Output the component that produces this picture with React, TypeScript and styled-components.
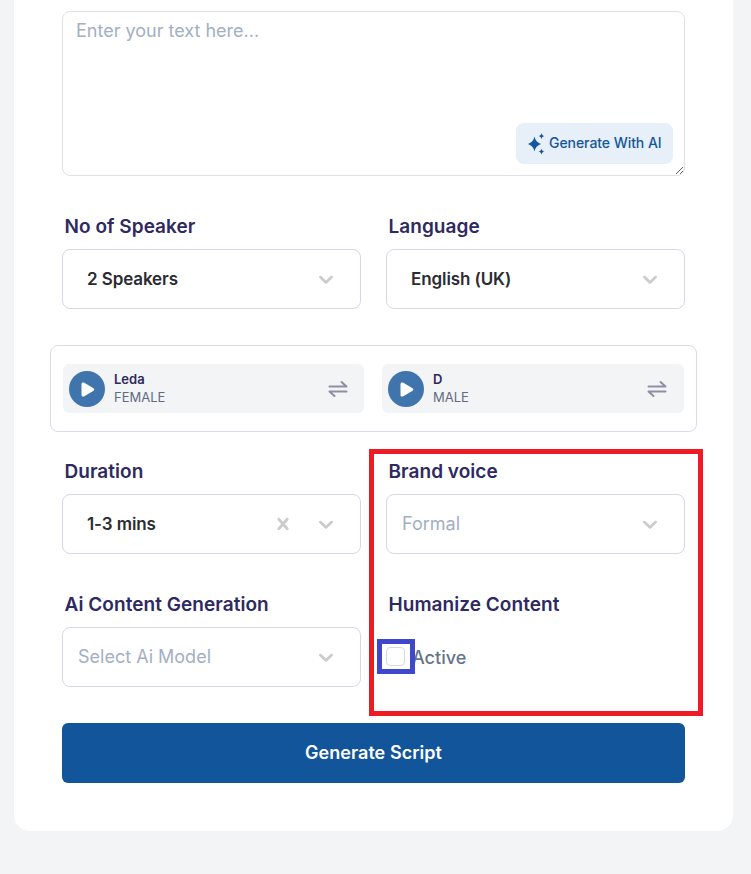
import React from "react";
import styled, { createGlobalStyle } from "styled-components";

const Global = createGlobalStyle`
  html, body { margin: 0; padding: 0; background: #f3f4f6; }
  body { font-family: Inter, "Liberation Sans", sans-serif; }
  * { box-sizing: border-box; }
`;

const Page = styled.div`
  position: relative;
  height: 874px;
  padding: 0 18px 0 14px;
  overflow: hidden;
  background: #f3f4f6;
`;

const Card = styled.main`
  background: #fff;
  border-radius: 0 0 16px 16px;
  padding: 11px 48px 48px;
`;

const TextWrap = styled.div`
  position: relative;
  height: 165px;
`;

const TextArea = styled.textarea`
  display: block;
  width: 100%;
  height: 165px;
  padding: 7px 13px;
  border: 1px solid #e1e1e4;
  border-radius: 8px;
  outline: none;
  font: 400 18px/24px Inter, sans-serif;
  color: #2b2b3a;
  &::placeholder { color: #a3afc2; opacity: 1; }
`;

const AiButton = styled.button`
  position: absolute;
  right: 12px;
  bottom: 12px;
  width: 157px;
  height: 41px;
  display: flex;
  align-items: center;
  gap: 2px;
  padding: 0 0 2px 11px;
  border: 0;
  border-radius: 8px;
  background: #e7eff8;
  color: #13569b;
  font: 500 14px/16px Inter, sans-serif;
  letter-spacing: -0.06px;
`;

const Grid = styled.div<{ $top: number }>`
  display: grid;
  grid-template-columns: 299px 299px;
  column-gap: 25px;
  margin-top: ${(p) => p.$top}px;
`;

const Field = styled.div<{ $top?: number }>`
  margin-top: ${(p) => p.$top ?? 0}px;
`;

const Label = styled.div`
  height: 24px;
  margin: 0 0 11px 2.5px;
  padding-top: 1px;
  font: 600 19px/24px Inter, sans-serif;
  letter-spacing: 0.05px;
  color: #2e2961;
`;

const Select = styled.div<{ $pad: number }>`
  height: 60px;
  display: flex;
  align-items: center;
  padding: 0 22px 0 ${(p) => p.$pad}px;
  border: 1px solid #d6d9e5;
  border-radius: 8px;
  background: #fff;
`;

const Value = styled.span<{ $muted?: boolean }>`
  flex: 1;
  font: ${(p) => (p.$muted ? "400 18px" : "600 17px")}/24px Inter, sans-serif;
  letter-spacing: ${(p) => (p.$muted ? 0 : -0.1)}px;
  color: ${(p) => (p.$muted ? "#a3afc2" : "#2b2b33")};
`;

const ClearSlot = styled.span`
  display: flex;
  margin-right: 19px;
`;

const VoiceBox = styled.section`
  display: grid;
  grid-template-columns: 301px 302px;
  column-gap: 18px;
  margin: 36px -12px 0;
  padding: 18px 12px;
  border: 1px solid #dadbe6;
  border-radius: 8px;
`;

const VoiceItem = styled.div`
  height: 49px;
  display: flex;
  align-items: center;
  gap: 9px;
  padding: 0 16px 0 6px;
  background: #f3f4f6;
  border-radius: 6px;
  &:last-child { padding-right: 17px; }
`;

const VoiceText = styled.div`
  flex: 1;
  margin-top: -1px;
`;

const VoiceName = styled.div`
  font: 600 13px/18px Inter, sans-serif;
  color: #2e2961;
`;

const VoiceGender = styled.div`
  font: 400 13px/18px Inter, sans-serif;
  color: #5f6b80;
`;

const CheckRow = styled.label`
  display: flex;
  align-items: center;
  height: 60px;
  margin-top: -1px;
`;

const Box = styled.span`
  width: 19px;
  height: 19px;
  border: 1px solid #d6d9e5;
  border-radius: 4px;
  background: #fff;
`;

const CheckText = styled.span`
  margin: 3px 0 0 7px;
  font: 500 18px/24px Inter, sans-serif;
  color: #64748b;
`;

const Submit = styled.button`
  display: block;
  width: 100%;
  height: 60px;
  margin-top: 36px;
  border: 0;
  border-radius: 6px;
  background: #13559a;
  color: #fff;
  font: 600 18px/24px Inter, sans-serif;
  letter-spacing: 0.05px;
`;

const RedMark = styled.div`
  position: absolute;
  left: 369px;
  top: 449px;
  width: 334px;
  height: 267px;
  border: 5px solid #ed1c24;
  pointer-events: none;
`;

const BlueMark = styled.div`
  position: absolute;
  left: 377px;
  top: 639px;
  width: 38px;
  height: 35px;
  border: 5px solid #3f48cc;
  pointer-events: none;
`;

const Chevron = () => (
  <svg width="24" height="24" viewBox="0 0 20 20" fill="#cccccc">
    <path d="M4.516 7.548c0.436-0.446 1.043-0.481 1.576 0l3.908 3.747 3.908-3.747c0.533-0.481 1.141-0.446 1.574 0 0.436 0.445 0.408 1.197 0 1.615-0.406 0.418-4.695 4.502-4.695 4.502-0.217 0.223-0.502 0.335-0.787 0.335s-0.57-0.112-0.789-0.335c0 0-4.287-4.084-4.695-4.502s-0.436-1.17 0-1.615z" />
  </svg>
);

const Cross = () => (
  <svg width="24" height="24" viewBox="0 0 20 20" fill="#cccccc">
    <path d="M14.348 14.849c-0.469 0.469-1.229 0.469-1.697 0l-2.651-3.030-2.651 3.029c-0.469 0.469-1.229 0.469-1.697 0-0.469-0.469-0.469-1.229 0-1.697l2.758-3.15-2.759-3.152c-0.469-0.469-0.469-1.228 0-1.697s1.228-0.469 1.697 0l2.652 3.031 2.651-3.031c0.469-0.469 1.228-0.469 1.697 0s0.469 1.229 0 1.697l-2.758 3.152 2.758 3.15c0.469 0.469 0.469 1.229 0 1.698z" />
  </svg>
);

const Play = () => (
  <svg width="36" height="36" viewBox="0 0 36 36" style={{ flex: "none" }}>
    <circle cx="18" cy="18" r="18" fill="#3f75ac" />
    <path d="M12.500 13c0-1.300 1.300-2 2.400-1.400l9.600 5.600c1 .6 1 2 0 2.600l-9.600 5.600c-1.100.6-2.400-.1-2.400-1.400z" fill="#fff" />
  </svg>
);

const Swap = () => (
  <svg width="20" height="18" viewBox="0 0 20 18" fill="none" stroke="#8e8fa3" strokeWidth="2" strokeLinecap="round" strokeLinejoin="round" style={{ flex: "none" }}>
    <path d="M1.500 6.500h17l-5-4.500" />
    <path d="M18.500 11.500h-17l5 4.500" />
  </svg>
);

const Sparkle = () => (
  <svg width="20" height="24" viewBox="0 0 20 24" style={{ flex: "none", marginTop: 2 }} fill="#13569b">
    <path d="M7.500 4.500c1 4 2.600 5.900 6.800 7.500-4.200 1.600-5.800 3.500-6.800 7.500-1-4-2.600-5.900-6.800-7.500 4.200-1.600 5.800-3.500 6.800-7.500z" />
    <path d="M14.500 1c.4 1.800 1.100 2.600 2.900 3.100-1.800.5-2.500 1.300-2.900 3.100-.4-1.800-1.100-2.600-2.900-3.100 1.800-.5 2.500-1.300 2.900-3.100z" />
    <path d="M14.500 16.500c.4 1.800 1.100 2.600 2.900 3.100-1.800.5-2.500 1.300-2.900 3.100-.4-1.800-1.100-2.600-2.900-3.100 1.800-.5 2.500-1.300 2.900-3.100z" />
  </svg>
);

type Voice = { name: string; gender: string };
const voices: Voice[] = [
  { name: "Leda", gender: "FEMALE" },
  { name: "D", gender: "MALE" },
];

export default function App() {
  return (
    <Page>
      <Global />
      <Card>
        <TextWrap>
          <TextArea placeholder="Enter your text here..." />
          <AiButton type="button">
            <Sparkle />
            Generate With AI
          </AiButton>
        </TextWrap>

        <Grid $top={38}>
          <Field>
            <Label>No of Speaker</Label>
            <Select $pad={24}>
              <Value>2 Speakers</Value>
              <Chevron />
            </Select>
          </Field>
          <Field>
            <Label>Language</Label>
            <Select $pad={24}>
              <Value>English (UK)</Value>
              <Chevron />
            </Select>
          </Field>
        </Grid>

        <VoiceBox>
          {voices.map((v) => (
            <VoiceItem key={v.name}>
              <Play />
              <VoiceText>
                <VoiceName>{v.name}</VoiceName>
                <VoiceGender>{v.gender}</VoiceGender>
              </VoiceText>
              <Swap />
            </VoiceItem>
          ))}
        </VoiceBox>

        <Grid $top={27}>
          <Field>
            <Label>Duration</Label>
            <Select $pad={24}>
              <Value>1-3 mins</Value>
              <ClearSlot>
                <Cross />
              </ClearSlot>
              <Chevron />
            </Select>
          </Field>
          <Field>
            <Label>Brand voice</Label>
            <Select $pad={15}>
              <Value $muted>Formal</Value>
              <Chevron />
            </Select>
          </Field>
          <Field $top={38}>
            <Label>Ai Content Generation</Label>
            <Select $pad={15}>
              <Value $muted>Select Ai Model</Value>
              <Chevron />
            </Select>
          </Field>
          <Field $top={38}>
            <Label>Humanize Content</Label>
            <CheckRow>
              <Box />
              <CheckText>Active</CheckText>
            </CheckRow>
          </Field>
        </Grid>

        <Submit type="button">Generate Script</Submit>
      </Card>
      <RedMark />
      <BlueMark />
    </Page>
  );
}
